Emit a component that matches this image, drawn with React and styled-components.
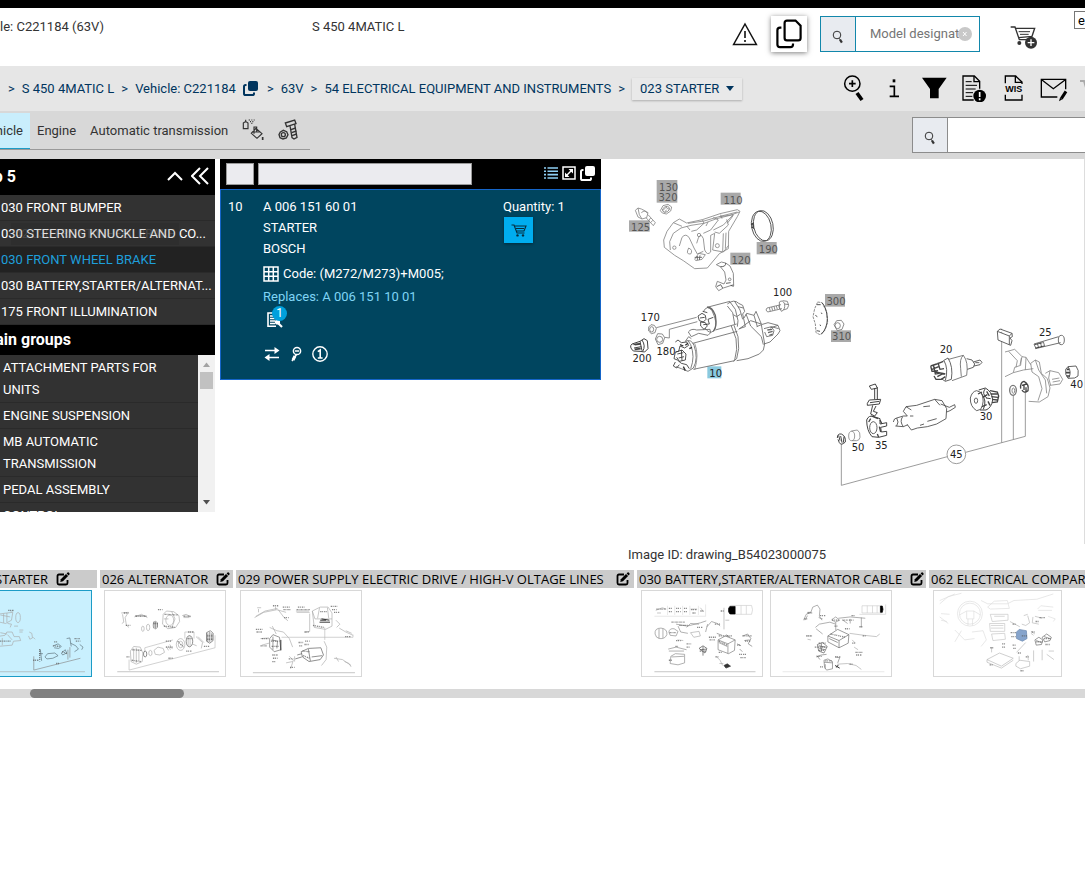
import React from "react";
import styled, { createGlobalStyle } from "styled-components";

const topGroups = [
    { name: "030 FRONT BUMPER" },
    { name: "030 STEERING KNUCKLE AND CO..." },
    { name: "030 FRONT WHEEL BRAKE", active: true },
    { name: "030 BATTERY,STARTER/ALTERNAT..." },
    { name: "175 FRONT ILLUMINATION" },
];

const mainGroups = [
    "ATTACHMENT PARTS FOR UNITS",
    "ENGINE SUSPENSION",
    "MB AUTOMATIC TRANSMISSION",
    "PEDAL ASSEMBLY",
    "CONTROL",
];

const App = () => {
    return (
        <>
            <GlobalStyle />
            <Page>
                <TopStripe />
                <Header />
                <Breadcrumb />
                <Tabs />
                <Content>
                    <Sidebar />
                    <Parts />
                    <Picture>
                        <Diagram />
                        <ImageId>Image ID: drawing_B54023000075</ImageId>
                    </Picture>
                </Content>
                <Strip />
                <Track>
                    <TrackThumb />
                </Track>
            </Page>
        </>
    );
};
export default App;

const SearchIcon = () => (
    <svg width="12" height="14" viewBox="0 0 12 14" fill="none" stroke="#333">
        <circle cx="5" cy="5" r="3.8" strokeWidth="1" />
        <path d="M7 8.2L8.3 10" strokeWidth="1" />
        <path d="M8 9.6L9.9 12.6" strokeWidth="2.2" />
    </svg>
);

const CopyIcon = ({ size = 15 }) => (
    <svg width={size} height={size} viewBox="0 0 15 15">
        <rect x="5" y="0" width="10" height="10" rx="2" fill="currentColor" />
        <path
            d="M3.5 4H2.6Q1 4 1 5.6V12.4Q1 14 2.6 14H9.4Q11 14 11 12.4V11.6"
            fill="none"
            stroke="currentColor"
            strokeWidth="2"
        />
    </svg>
);

const EditIcon = () => (
    <svg width="14" height="14" viewBox="0 0 14 14">
        <path
            d="M8 2.5H3Q1.5 2.5 1.5 4V11Q1.5 12.5 3 12.5H10Q11.5 12.5 11.5 11V8"
            fill="none"
            stroke="#000"
            strokeWidth="1.8"
        />
        <path d="M4.3 9.9L4.8 7.2L10 2L12.1 4.1L7 9.3Z" fill="#000" />
        <path d="M10.6 1.4L11.6 0.5Q12.3 0 13 0.8L13.5 1.4Q14 2 13.4 2.6L12.7 3.4Z" fill="#000" />
    </svg>
);

const Header = () => (
    <HeaderBar>
        <ModelCode>Vehicle: C221184 (63V)</ModelCode>
        <ModelName>S 450 4MATIC L</ModelName>
        <HeaderTools>
            <PlainButton aria-label="Warnings">
                <svg width="26" height="24" viewBox="0 0 26 24" fill="none" stroke="#111">
                    <path d="M13 2L24.4 22.4H1.6Z" strokeWidth="1.5" />
                    <path d="M13 9V16M13 18V20" strokeWidth="1.6" />
                </svg>
            </PlainButton>
            <CopyButton aria-label="Copy">
                <svg width="26" height="30" viewBox="0 0 26 30" fill="none" stroke="#000" strokeWidth="2.2">
                    <path d="M11 1.6H19.5L24.6 6.8V19Q24.6 21.4 22.2 21.4H11Q8.6 21.4 8.6 19V4Q8.6 1.6 11 1.6Z" />
                    <path d="M5.4 8.6H4Q1.4 8.6 1.4 11.2V25.6Q1.4 28.2 4 28.2H14.4Q17 28.2 17 25.6V24.6" />
                </svg>
            </CopyButton>
            <SearchGroup $blue>
                <SearchButton aria-label="Search model">
                    <SearchIcon />
                </SearchButton>
                <SearchInput aria-label="Model designation" placeholder="Model designat" />
                <Clear aria-label="Clear">
                    <svg width="14" height="14" viewBox="0 0 14 14">
                        <circle cx="7" cy="7" r="7" fill="#c8c8c8" />
                        <path d="M5 5L8.5 9M8.5 5L5 9" stroke="#fff" />
                    </svg>
                </Clear>
            </SearchGroup>
            <CartButton aria-label="Add to cart">
                <svg width="28" height="24" viewBox="0 0 84 72" fill="none" stroke="#333" strokeWidth="4">
                    <path d="M2 6H15L28 44H66" />
                    <path d="M18 10H74L66 34L26 38" />
                    <path d="M26 20H60M30 28H56" strokeWidth="3" />
                    <circle cx="28" cy="54" r="6" fill="#333" stroke="none" />
                    <circle cx="63" cy="53" r="18" fill="#333" stroke="none" />
                    <path d="M63 43V63M53 53H73" stroke="#fff" />
                </svg>
            </CartButton>
            <Language>en</Language>
        </HeaderTools>
    </HeaderBar>
);

const Breadcrumb = () => (
    <CrumbBar>
        <Crumbs aria-label="Breadcrumb">
            <span>&gt;</span>
            <a href="#model">S 450 4MATIC L</a>
            <span>&gt;</span>
            <a href="#vehicle">Vehicle: C221184</a>
            <CrumbCopy aria-label="Copy vehicle">
                <CopyIcon />
            </CrumbCopy>
            <span>&gt;</span>
            <a href="#63v">63V</a>
            <span>&gt;</span>
            <a href="#54">54 ELECTRICAL EQUIPMENT AND INSTRUMENTS</a>
            <span>&gt;</span>
            <GroupButton>
                023 STARTER
                <svg width="8" height="5" viewBox="0 0 8 5">
                    <path d="M0 0H8L4 5Z" fill="#00355e" />
                </svg>
            </GroupButton>
        </Crumbs>
        <Tools>
            <PlainButton aria-label="Zoom in">
                <svg width="22" height="28" viewBox="370 220 66 84" fill="none" stroke="#000">
                    <circle cx="398" cy="249" r="23" strokeWidth="4.5" />
                    <path d="M388 249H408M398 239V259" strokeWidth="5" />
                    <path d="M412 277L427 298" strokeWidth="11" />
                </svg>
            </PlainButton>
            <PlainButton aria-label="Information">
                <svg width="12" height="28" viewBox="507 220 36 84" fill="none" stroke="#000">
                    <path d="M512 257H526V287M512 287H540" strokeWidth="5" />
                    <rect x="521" y="236" width="8" height="9" fill="#000" stroke="none" />
                </svg>
            </PlainButton>
            <PlainButton aria-label="Filter">
                <svg width="26" height="28" viewBox="604 220 78 84">
                    <path d="M607 231H681L657 265V293H631V265Z" fill="#000" />
                </svg>
            </PlainButton>
            <PlainButton aria-label="Notes">
                <svg width="26" height="28" viewBox="732 220 78 84" fill="none" stroke="#000" strokeWidth="4">
                    <path d="M770 298H738V226H772L788 242V264" />
                    <path d="M771 226V243H788" />
                    <path d="M746 243H764M746 254H780M746 265H776M746 276H768M746 287H766" strokeWidth="3" />
                    <circle cx="788" cy="286" r="19" fill="#000" stroke="none" />
                    <path d="M788 274V289M788 293V299" stroke="#fff" strokeWidth="5" />
                </svg>
            </PlainButton>
            <PlainButton aria-label="WIS">
                <svg width="22" height="28" viewBox="850 220 66 84" fill="none" stroke="#000" strokeWidth="4">
                    <path d="M857 248V226H888L907 244V250M887 226V245H907" />
                    <path d="M857 282V298H907V282" />
                    <WisText x="882" y="275">WIS</WisText>
                </svg>
            </PlainButton>
            <PlainButton aria-label="Message">
                <svg width="28" height="28" viewBox="960 220 84 84" fill="none" stroke="#000" strokeWidth="4">
                    <path d="M1012 289H964V236H1037V266" />
                    <path d="M966 238L1000 264L1035 238" />
                    <path d="M1024 294L1038 272" strokeWidth="9" />
                    <path d="M1017 302L1020 291L1027 296Z" fill="#000" stroke="none" />
                </svg>
            </PlainButton>
            <PlainButton aria-label="Cart">
                <svg width="28" height="28" viewBox="0 0 28 28" fill="none" stroke="#aaa" strokeWidth="2">
                    <path d="M0 7H4L8 20H22M6 10H25L22 17" />
                </svg>
            </PlainButton>
        </Tools>
    </CrumbBar>
);

const Tabs = () => (
    <TabBar>
        <TabList>
            <Tab $active>Vehicle</Tab>
            <Tab>Engine</Tab>
            <Tab>Automatic transmission</Tab>
            <Tab aria-label="Fluids">
                <svg width="22" height="22" viewBox="0 0 66 66" fill="none" stroke="#333" strokeWidth="3.5">
                    <path d="M4 12L8 9H14L18 12V29H4ZM11 9V2" />
                    <path d="M20 3H24M28 3H31M35 3H38M24 8H27M31 8H34M28 13H31" />
                    <path d="M42 28L60 44L45 58L28 43ZM32 39H56M36 44V24H44V40" />
                    <path d="M62 54V63" strokeWidth="5" />
                </svg>
            </Tab>
            <Tab aria-label="Small parts">
                <svg width="22" height="22" viewBox="0 0 66 66" fill="none" stroke="#333" strokeWidth="4">
                    <path d="M7 39L16 34L26 38L30 47L25 57L15 60L6 56L3 47Z" />
                    <circle cx="16" cy="47" r="6" />
                    <path d="M22 12L50 3L54 14L26 23ZM36 20L42 56L48 60L57 55L50 16" />
                    <path d="M39 32L53 27M41 41L55 36M42 50L56 45" />
                </svg>
            </Tab>
        </TabList>
        <SearchGroup>
            <SearchButton aria-label="Search parts">
                <SearchIcon />
            </SearchButton>
            <SearchInput aria-label="Part search" />
        </SearchGroup>
    </TabBar>
);

const Sidebar = () => (
    <Side>
        <SideHead $tall>
            <SideTitle $width="16px">Top 5</SideTitle>
            <SideButtons>
                <PlainButton aria-label="Collapse">
                    <svg width="16" height="18" viewBox="0 0 16 18" fill="none" stroke="#fff" strokeWidth="2">
                        <path d="M1 13L8 6L15 13" />
                    </svg>
                </PlainButton>
                <PlainButton aria-label="Hide sidebar">
                    <svg width="18" height="18" viewBox="0 0 18 18" fill="none" stroke="#fff" strokeWidth="2">
                        <path d="M9 1L1 9L9 17M17 1L9 9L17 17" />
                    </svg>
                </PlainButton>
            </SideButtons>
        </SideHead>
        <TopList>
            {topGroups.map((group) => (
                <SideItem key={group.name} $active={group.active} $single>
                    {group.name}
                </SideItem>
            ))}
            <Ghost>42.030 FRONT WHEEL BRAKE</Ghost>
        </TopList>
        <SideHead>
            <SideTitle $width="71px">Main groups</SideTitle>
        </SideHead>
        <MainBox>
            <MainList>
                {mainGroups.map((name) => (
                    <SideItem key={name}>{name}</SideItem>
                ))}
            </MainList>
            <SideScroll>
                <svg width="9" height="5" viewBox="0 0 9 5">
                    <path d="M1 5L4.5 0.5L8 5Z" fill="#a3a3a3" />
                </svg>
                <SideThumb />
                <svg width="9" height="5" viewBox="0 0 9 5">
                    <path d="M1 0L4.5 4.5L8 0Z" fill="#505050" />
                </svg>
            </SideScroll>
        </MainBox>
    </Side>
);

const Parts = () => (
    <PartsPanel>
        <PartsHead>
            <PosInput aria-label="Position filter" />
            <PartInput aria-label="Part filter" />
            <PartsTools>
                <PlainButton aria-label="List view">
                    <svg width="14" height="14" viewBox="0 0 14 14" stroke="#8fd0f5" strokeWidth="1.6">
                        <path d="M0 2H2M0 5.3H2M0 8.6H2M0 12H2M3.5 2H14M3.5 5.3H14M3.5 8.6H14M3.5 12H14" />
                    </svg>
                </PlainButton>
                <PlainButton aria-label="Expand">
                    <svg width="14" height="14" viewBox="0 0 14 14" fill="none" stroke="#fff" strokeWidth="1.5">
                        <rect x="1" y="1" width="12" height="12" />
                        <path d="M4 10L10 4" />
                        <path d="M6.5 3H11V7.5ZM3 6.5V11H7.5Z" fill="#fff" stroke="none" />
                    </svg>
                </PlainButton>
                <PlainButton aria-label="Copy parts">
                    <CopyIcon />
                </PlainButton>
            </PartsTools>
        </PartsHead>
        <PartCard>
            <span>10</span>
            <div>
                <PartLine>A 006 151 60 01</PartLine>
                <PartLine>STARTER</PartLine>
                <PartLine>BOSCH</PartLine>
                <CodeLine>
                    <svg width="16" height="16" viewBox="0 0 16 16" fill="none" stroke="#fff" strokeWidth="1.5">
                        <path d="M1 1H15V15H1ZM5.7 1V15M10.3 1V15M1 5.7H15M1 10.3H15" />
                    </svg>
                    Code: (M272/M273)+M005;
                </CodeLine>
                <Replaces>Replaces: A 006 151 10 01</Replaces>
                <Note aria-label="Footnotes">
                    <svg width="16" height="18" viewBox="0 0 16 18" fill="none" stroke="#fff" strokeWidth="1.6">
                        <path d="M9 15.2H1V2H12V10" />
                        <path d="M3 5H10M3 7.5H10M3 10H8M3 12.5H8" />
                        <circle cx="10.5" cy="11" r="1.8" fill="#fff" />
                        <path d="M11 12L15 16" strokeWidth="2.2" />
                    </svg>
                    <Badge>1</Badge>
                </Note>
                <IconRow>
                    <PlainButton aria-label="Replacement">
                        <svg width="16" height="16" viewBox="0 0 16 16" fill="none" stroke="#fff" strokeWidth="1.6">
                            <path d="M1 4.5H12M15 11.5H4" />
                            <path d="M10.5 1L15.5 4.5L10.5 8ZM5.5 8L0.5 11.5L5.5 15Z" fill="#fff" stroke="none" />
                        </svg>
                    </PlainButton>
                    <PlainButton aria-label="Key">
                        <svg width="12" height="16" viewBox="0 0 12 16" fill="none" stroke="#fff" strokeWidth="1.5">
                            <circle cx="7" cy="5" r="3.6" />
                            <path d="M5 5H9M6.5 8.5L2 15" />
                            <path d="M5 10L3 14" strokeWidth="3" />
                        </svg>
                    </PlainButton>
                    <PlainButton aria-label="Details">
                        <svg width="16" height="16" viewBox="0 0 16 16" fill="none" stroke="#fff" strokeWidth="1.4">
                            <circle cx="8" cy="8" r="7.2" />
                            <path d="M5.8 5.6L8.2 4V12M5.8 12H10.6" strokeWidth="1.6" />
                        </svg>
                    </PlainButton>
                </IconRow>
            </div>
            <div>
                <PartLine>Quantity: 1</PartLine>
                <BuyButton aria-label="Add starter to cart">
                    <svg width="16" height="14" viewBox="0 0 16 14" fill="none" stroke="#062c3c" strokeWidth="1.1">
                        <path d="M0.5 2H3L6 10H13.5M3.5 3H15L13 8H5.5M5 5.5H13" />
                        <circle cx="6.5" cy="12.4" r="1.2" fill="#062c3c" stroke="none" />
                        <circle cx="12" cy="12.4" r="1.2" fill="#062c3c" stroke="none" />
                    </svg>
                </BuyButton>
            </div>
        </PartCard>
    </PartsPanel>
);

const upperLabels = [
    ["130", 146, 63], ["320", 144, 93], ["110", 339, 101], ["125", 62, 182],
    ["190", 445, 248], ["120", 363, 281], ["300", 648, 406], ["310", 665, 510],
    ["100", 488, 378], ["170", 91, 454], ["180", 138, 555], ["200", 66, 577],
    ["10", 287, 620],
];

const lowerLabels = [
    ["25", 676, 79], ["20", 378, 128], ["40", 770, 234], ["30", 498, 331],
    ["50", 114, 422], ["35", 184, 418], ["45", 409, 444],
];

const markers = [
    [110, 30, 62, 68], [302, 68, 60, 36], [27, 151, 62, 34], [410, 216, 60, 37],
    [331, 248, 60, 36], [615, 372, 60, 38], [633, 481, 60, 35],
];

const Diagram = () => (
    <DiagramSvg viewBox="0 0 1452 1155" role="img" aria-label="Starter drawing">
        <g transform="translate(57 33)">
            {markers.map(([x, y, w, h]) => (
                <rect key={`${x}-${y}`} x={x} y={y} width={w} height={h} fill="#a9a9a9" />
            ))}
            <rect x="262" y="589" width="42" height="36" fill="#8ac9df" />

            {/* bracket, bolts and clamp */}
            <g fill="none" stroke="#858585" strokeWidth="2.5">
                <path d="M133 232L131 210L141 184L160 158L178 147L200 159L247 149L300 131L352 119L360 124L352 140L326 184L325 236L298 251L262 294L224 296L190 272L164 256Z" />
                <path d="M151 240L149 215L160 190L183 174L213 166L252 160L290 146L330 136L358 126" />
                <path d="M160 158L186 169M247 149L252 160L230 180L214 184M280 142L295 150L272 180L250 190M300 140L340 134L310 165L280 180M320 148L325 165L298 190L284 186" />
                <path d="M178 228L186 202Q198 188 208 204L222 234L232 252L250 244M230 220Q240 180 250 206L254 240Q262 258 272 246L272 196L284 190L278 240L310 246L326 226M310 190L308 244" />
                <path d="M206 234Q196 254 212 252Q220 240 206 234M224 268L236 250L256 254L246 268L228 272Z" />
                <path d="M224 262H246M232 258V270M240 256L238 270" stroke="#555" />
                <path d="M204 160L252 153L304 138L352 126M200 168L210 180M264 156L258 168M302 134L306 146M318 188L316 236M340 136L322 160" />
                <circle cx="163" cy="233" r="5" />
                <circle cx="237" cy="195" r="5" />
                <circle cx="292" cy="227" r="6" />
                <path d="M46 121L54 114L64 117L72 121L84 128L80 143L66 147L54 141ZM54 114L58 134L66 147M64 128Q76 118 82 130" />
                <path d="M78 143L100 167L106 158L84 134M86 152L92 144M92 158L98 151" />
                <path d="M121 122L129 107L144 103L155 111L152 123L139 132L127 129Z" />
                <ellipse cx="138" cy="118" rx="11" ry="8" transform="rotate(-30 138 118)" />
                <path d="M129 121L138 112L147 118M134 126L140 119" />
            </g>
            <g fill="none" stroke="#444" strokeWidth="2.5">
                <ellipse cx="430" cy="167" rx="29" ry="46" transform="rotate(-12 430 167)" />
                <ellipse cx="424" cy="169" rx="29" ry="46" transform="rotate(-12 424 169)" />
                <path d="M393 164L399 160L400 174L394 171" strokeWidth="4" />
            </g>
            <g fill="none" stroke="#777" strokeWidth="2.5">
                <path d="M289 284L304 276L317 279L330 288L340 310L341 348M289 284L301 290L314 306L318 330L312 342L292 334L287 350L296 362L310 354L341 344" />
                <path d="M301 290Q318 291 317 279M290 350L302 344L308 354M318 340L332 338M332 346L341 349" stroke="#444" />
                <circle cx="329" cy="328" r="4" />
            </g>

            {/* complete starter */}
            <g fill="none" stroke="#666" strokeWidth="2.5">
                <path d="M261 412L330 394M286 480L350 462M250 425Q262 402 276 422Q296 462 282 482Q268 494 255 474" />
                <path d="M261 412Q276 410 286 436Q292 470 280 484" strokeWidth="4" />
                <path d="M234 438L246 430L256 436L258 448L250 456L238 452ZM242 456L256 458L262 468L252 478L242 468ZM248 424L262 428M240 444L254 442M250 464L268 462L264 448L280 442" stroke="#333" />
                <path d="M322 402Q342 386 356 400L368 406L374 424L368 432L376 470L358 476M330 396L346 418L354 452L352 470M344 394L360 420L368 448M322 408L338 428L344 462M354 410L370 414M362 432L350 440L340 434" />
                <path d="M218 520L352 484M220 598L344 572M342 466L354 500L356 536L350 566L340 574M334 468L348 506L350 538L344 570" />
                <path d="M356 478L392 452L424 462M350 572L384 566L418 552L430 540L434 522L424 464L410 470M372 444L380 430L402 436L408 424L424 462M378 432L392 468M402 436L412 470M392 468L424 500L430 524" />
                <path d="M424 464L444 458L474 466L480 482L474 492L450 516L432 522M432 476L454 470L476 476M454 470L462 482L458 496L440 500L434 486M474 466L450 474" />
                <path d="M442 480L456 478M444 488L458 484M448 496L458 492" strokeWidth="4" />
                <path d="M205 486Q214 474 230 480L270 478Q276 490 264 496L236 490L214 500Z" />
                <path d="M196 514Q214 506 222 526Q236 566 220 594L204 604L184 596L168 590M204 512L212 524Q226 560 212 596M196 514L206 500L214 506" />
                <path d="M224 520Q238 554 224 600" stroke="#888" />
                <path d="M166 516L174 510L184 518L200 516L206 526L194 534L180 528L176 544L166 546L162 566L172 570L184 580L200 584L208 596M168 546L186 540L198 552L196 570L178 574L170 562M172 552L190 548M176 564L192 560M184 540L186 572M166 576L160 588L170 594L178 584" stroke="#333" />
                <path d="M180 524L190 528M196 526L204 520M190 590L196 602M208 536L216 532" stroke="#333" strokeWidth="4" />
            </g>
            <g fill="none" stroke="#777" strokeWidth="2.5">
                <path d="M109 473L230 442M134 502L148 504V478L232 455" />
                <path d="M86 471L93 464L103 466L109 475L105 488L94 491L86 483Z" />
                <ellipse cx="95" cy="478" rx="6" ry="8" />
                <path d="M106 507L113 491L127 492L134 503L128 520L114 524Z" />
                <circle cx="119" cy="508" r="9" />
                <path d="M441 414L483 404M443 426L486 416M441 414L438 420L443 426M448 413L451 424M455 411L458 422M462 409L465 420M469 408L472 418M476 406L479 417" />
                <path d="M478 396Q488 388 494 402Q496 420 484 424Q476 414 478 396M488 392L502 394L506 406L502 416L490 420M494 402L506 404" />
                <path d="M593 396L606 398L620 426L623 456L614 482L600 494L588 488L586 462L579 440L584 416Z" strokeDasharray="8 3" />
                <path d="M606 398Q620 412 622 446Q622 474 604 493M591 404L602 404M590 482L600 484" stroke="#333" />
                <path d="M586 436L592 440M604 428L606 432M600 464L602 468" stroke="#333" />
                <path d="M642 464L650 452L664 451L672 462L666 478L652 482Z" />
                <ellipse cx="653" cy="467" rx="8" ry="9" />
            </g>
            <g fill="none" stroke="#444" strokeWidth="3">
                <path d="M36 522L60 514L72 506L82 512L84 536L74 546L60 544L40 543Q26 530 36 522M60 514L66 542M40 524L62 520M42 534L64 530M66 510Q78 528 68 544" />
                <path d="M44 524L62 522M44 538L62 536" strokeWidth="5" />
            </g>
            {upperLabels.map(([text, x, y]) => (
                <PartLabel key={text} x={x} y={y} $faded={y < 300 || x > 600}>
                    {text}
                </PartLabel>
            ))}
        </g>

        {/* exploded view */}
        <g transform="translate(657 453)">
            <g fill="none" stroke="#888" strokeWidth="2.5">
                <path d="M64 402V526L382 440M437 427L616 379V244M545 56V398M580 256V388" />
                <circle cx="409" cy="433" r="28" />
                <path d="M555 126L584 118L606 140L618 142L632 164M555 200L580 188L584 172L602 166L604 144M580 188L610 180L640 176M566 124L592 152L588 172M606 140L600 164M618 142L616 180" />
                <path d="M632 160L646 150L658 156L664 190L682 206L690 234L684 260L658 276L626 274M632 160L636 186L656 200L666 236L654 272M646 150L656 180L676 210L680 250" />
                <path d="M676 190L690 182L716 188L728 208L720 222L690 226M696 208L718 204M698 216L720 212M690 182L686 204L692 226" />
                <path d="M642 102L716 80M646 116L722 98M642 102L648 116M652 100L656 114M661 97L665 111M670 95L674 109" stroke="#555" />
                <ellipse cx="724" cy="90" rx="9" ry="14" stroke="#555" />
                <path d="M644 104L668 98M647 114L672 108" stroke="#333" />
            </g>
            <g fill="none" stroke="#444" strokeWidth="2.5">
                <path d="M532 64L540 57L576 70L577 80L570 84L576 92L572 106L534 90ZM532 64L568 78L576 70M568 78V104" fill="#fff" />
                <path d="M737 178L744 170L768 168Q778 180 774 198L764 204L744 205Q734 194 737 178" />
                <path d="M744 170Q756 186 746 204" />
                <path d="M740 178H748M738 188H750M740 198H750" strokeWidth="5" />

                <path d="M386 148L430 136Q446 156 440 196L396 212M430 136Q418 146 422 176L424 200" stroke="#666" />
                <path d="M370 152L384 144Q400 170 394 208L376 214L364 206M372 152Q386 176 376 212M440 146L456 150L464 162L460 172L442 178M460 156L480 150L486 157L480 164L462 168M466 158H478" />
                <path d="M332 168L350 162L370 154M332 168L336 184L354 182M340 164L346 192L358 190M342 198L348 208L364 208L376 200M354 158L360 178L372 176M346 186L376 192M352 200L370 190M336 178L356 170" strokeWidth="4" />

                <path d="M451 264Q456 244 470 242L484 248Q496 274 482 298L470 302Q450 290 451 264Z" />
                <ellipse cx="468" cy="272" rx="5" ry="8" />
                <path d="M476 240L496 234Q516 244 518 270Q514 294 498 300L480 300M496 236Q484 250 500 264M498 264L512 266M484 250Q502 272 490 298" strokeWidth="3" />
                <path d="M510 242L532 246L536 258L532 276L516 278M512 252L532 252M514 260L534 262M516 268L532 270" strokeWidth="4" />
                <path d="M474 252L486 246M488 262L502 254M486 290L500 284M500 244L508 258M504 274L510 286" strokeWidth="4" />

                <ellipse cx="579" cy="241" rx="10" ry="15" stroke="#777" strokeWidth="4" />
                <ellipse cx="580" cy="242" rx="4" ry="8" stroke="#777" />
                <path d="M602 236Q600 216 612 214Q628 222 624 242Q612 252 606 240M612 226V240M606 226L620 222M618 232V244" strokeWidth="4" />

                <path d="M148 228L166 222L172 234L154 238ZM164 234V268M172 232V270M142 280L148 270L182 268L178 282L142 286ZM150 278L178 274M158 286L152 312L164 318L172 308L160 304L168 288" strokeWidth="3" />
                <path d="M140 330Q146 314 162 320L180 326L180 342L200 338V348L182 352L184 366L200 364V376L176 382L156 380Q140 362 140 330Z" strokeWidth="3" />
                <ellipse cx="160" cy="353" rx="11" ry="18" />
                <path d="M154 318L174 326M180 330L186 342M178 350L182 366M146 336L152 326M172 372L176 382" strokeWidth="4" />
                <path d="M220 336Q222 324 230 324L250 318L262 318M226 348L250 350L264 344M248 320Q238 334 250 350M230 324Q238 336 230 348" />
                <path d="M262 318L250 304L258 290L290 286L344 268L366 272L380 296L378 326L350 342L322 350L292 354L274 360L262 344M344 268L360 286M258 290L274 300M362 282L388 292L404 284L406 292L390 302L380 306M310 290L330 288M280 318L270 318M322 334L350 326M300 346L312 342" />
                <path d="M52 384Q52 370 64 372Q78 378 76 396Q64 408 58 398L54 388M62 378L66 398M72 380L70 398M56 376L60 392" strokeWidth="3" />
            </g>
            <g fill="none" stroke="#888" strokeWidth="2.5">
                <ellipse cx="95" cy="378" rx="9" ry="14" />
                <path d="M94 363L112 360Q122 366 120 382Q118 392 110 392L96 392" />
            </g>
            {lowerLabels.map(([text, x, y]) => (
                <PartLabel key={text} x={x} y={y}>
                    {text}
                </PartLabel>
            ))}
        </g>
    </DiagramSvg>
);

const StarterThumb = () => (
    <ThumbSvg viewBox="-89 151 365 259">
        <path d="M-10 222L20 218L38 216L34 240L16 250L-10 244M0 224L30 230M10 220V248M20 218V246M22 250L34 252L30 262" />
        <ellipse cx="54" cy="232" rx="7" ry="15" />
        <path d="M-10 290L14 286L20 276L36 276L42 290L58 290L62 302L40 304L36 316L-10 320M0 278L20 282M6 294V316M22 284L36 300M58 270H70M58 276H68M30 212H40M42 258H54" />
        <path d="M88 276L96 280L98 294L90 298L86 288M100 292L106 298" />
        <path d="M102 350V392L244 356M212 354V322M206 330V360" stroke="#888" />
        <path d="M122 330L126 364M118 342H130M136 352L144 342L166 340L176 348L160 356L142 358ZM162 318L176 312L186 320L178 326L164 324M186 340L198 330L202 340L190 346ZM202 296L212 294L216 320M214 310L230 318L238 328L226 336M242 314L252 322L248 330" stroke="#5c7078" />
        <Marks d="M100 362H118M120 328V366M164 306H174M226 296H242M230 304H244M170 372H182M160 318L184 320M188 336L204 342M-2 304H34M24 210H40" />
        <path d="M-80 397H258" />
    </ThumbSvg>
);

const AlternatorThumb = () => (
    <ThumbSvg viewBox="313 151 365 259">
        <path d="M362 218L384 216L374 232L378 256L386 262M366 222L370 246L364 250M402 230L424 222L442 232M404 226H436M548 226L560 222L574 230M552 232H570" />
        <ellipse cx="510" cy="240" rx="12" ry="16" />
        <path d="M490 222L500 212L522 214L538 226L540 244L528 262L504 266L488 252ZM516 214L526 236L516 264M492 236H506" />
        <ellipse cx="428" cy="266" rx="4" ry="8" />
        <ellipse cx="444" cy="262" rx="5" ry="10" />
        <ellipse cx="466" cy="255" rx="7" ry="12" />
        <path d="M462 244V264M467 244V266M472 248V262" stroke="#555" />
        <path d="M386 360V392L648 324V286M434 336V324L520 300M556 296V276H584V296" stroke="#bbb" />
        <path d="M390 334L400 320L420 322L428 340L426 366L408 374L392 366ZM400 326V366M408 324V370M416 328V364" />
        <ellipse cx="435" cy="343" rx="5" ry="9" stroke="#555" />
        <ellipse cx="451" cy="340" rx="5" ry="8" />
        <path d="M462 332L474 322L490 326L494 338L480 346L466 344ZM500 320L506 332M510 314L518 328M506 318L512 330" />
        <ellipse cx="543" cy="314" rx="13" ry="18" />
        <ellipse cx="543" cy="314" rx="7" ry="10" />
        <ellipse cx="570" cy="304" rx="10" ry="17" stroke="#555" />
        <path d="M566 290V320M572 288V320M578 312L592 318M590 290L610 308L606 326M596 290L614 308" />
        <path d="M622 278L634 272L642 280V302L632 310L622 304ZM626 280V306M632 276V306M638 280V302" stroke="#555" />
        <Marks d="M370 218H384M376 256H390M406 228H440M474 208H488M552 228H574M494 222L534 224M492 258L528 262M460 250H474M498 304H514M498 322H520M506 356H520M378 352H388M396 330L424 332M394 362L422 366M566 276H584M560 334H576M614 320H630M624 288H642M624 298H642M534 304L552 322M564 296H578" />
        <path d="M350 397H660" />
    </ThumbSvg>
);

const PowerThumb = () => (
    <ThumbSvg viewBox="721 151 365 259">
        <path d="M762 232L790 216L830 208L858 216M766 228L794 212L832 204M834 208L852 232L864 242M770 202H782M774 206V216M826 200V208M888 212H928M890 216H930" />
        <path d="M938 212L962 200H986L998 218V258L978 268L944 262ZM938 212L946 236L998 236M960 202L954 234M984 202L988 234M930 220V274L916 276M1010 240L1022 252L1012 262M1020 264L1040 276L1062 286M1040 272L1058 280" />
        <path d="M962 240H980M960 246H992M966 236L990 240" stroke="#333" strokeWidth="3" />
        <path d="M844 292H1062V284M976 262V300" stroke="#bbb" />
        <path d="M808 262L830 272L850 276L868 296L878 322M816 258L828 282M780 296L806 294M784 316L806 310" />
        <path d="M808 296L818 284L838 292L842 330L822 336L808 322ZM814 300L832 304L830 326M818 290V330" stroke="#666" />
        <path d="M842 300V332" stroke="#333" strokeWidth="3" />
        <path d="M904 336L926 326L964 324L972 346L962 360L928 366L908 352ZM926 328L932 364M936 352L968 348M886 358L906 352M892 346L906 342" stroke="#555" />
        <path d="M974 304L982 322L980 360L966 378M868 350L880 362L872 388M884 350V366M858 370L878 366M1004 356L1030 360L1056 378M1010 352L1018 366M1036 366L1050 372L1056 382" />
        <Marks d="M818 196H834M848 200H870M850 208H872M894 200H914M890 208H930M994 198H1014M998 208H1012M1004 216H1022M766 268H786M768 276H786M784 296H804M780 318H800M816 346H834M818 356H832M816 366H826M896 308H910M898 318H908M916 304H930M914 314H928M962 214H982M940 256L974 262M812 304H838M814 320H838M908 334L930 336M910 348L930 356M866 358H880M1038 290H1054M852 232H866M870 384H884M914 276H928" />
        <path d="M757 400H1068" />
    </ThumbSvg>
);

const BatteryThumb = () => (
    <ThumbSvg viewBox="124 151 362 259">
        <path d="M160 228H316V192M200 196V224M222 196V224M246 196V224M268 196V224M294 196V224" stroke="#ddd" />
        <path d="M164 210L184 202L196 206M168 218H180M270 206H290M300 202L310 214" />
        <path d="M388 198L394 195H456Q462 208 456 222H394L386 216ZM424 195V222M440 195V222" stroke="#ccc" />
        <path d="M390 198H406V221H390L386 214V204Z" fill="#000" stroke="#000" />
        <path d="M372 202V268M376 240H388" />
        <path d="M162 282Q160 264 180 264Q200 266 198 284Q192 298 176 296Q164 294 162 282M174 266V296M186 266V294M204 276Q206 264 220 266L232 274L226 288L208 286ZM226 252L260 258L300 248L318 242M232 258L240 276L262 280M258 262L270 250L296 252M320 260L334 244L352 250L360 258M316 276L322 252" stroke="#888" />
        <path d="M270 278L280 292L300 288L296 274ZM230 300L248 302" />
        <path d="M354 300L376 288L406 300L404 332L386 342L354 330ZM354 300L384 312L406 300M384 312V342M356 308L382 320M350 280L366 286M378 284L390 292" stroke="#777" />
        <path d="M430 288L444 282L454 296L446 312L458 320M434 302L450 300M412 312L424 318M420 328L428 336" stroke="#777" />
        <path d="M202 328L226 322L258 330M204 334H250M210 350L224 342L252 344V370L232 376L208 372ZM212 352L250 350" stroke="#888" />
        <path d="M296 326L308 318L320 326L314 340ZM300 330L318 328M308 320V348" stroke="#444" />
        <path d="M372 378L382 373L392 380L378 386Z" fill="#333" stroke="#333" />
        <path d="M348 350L360 362L368 378M358 372H370" />
        <Marks d="M204 204H216M204 214H216M226 204H240M226 214H240M250 204H262M250 214H262M272 208H290M276 218H288M300 212H310M166 206H194M362 212H374M212 246H252M236 256H262M290 262H306M344 252H362M326 292H348M328 300H344M356 304L382 316M412 316H424M418 344H440M422 354H440M428 288H456M436 304H452M258 312H272M258 322H270M204 362H216M224 320H232M226 302H240M206 278H226M356 338H368M356 288H398M298 334H318M346 352H356" />
        <path d="M160 397H468" />
    </ThumbSvg>
);

const BatteryThumbB = () => (
    <ThumbSvg viewBox="511 151 365 259">
        <path d="M788 196H848Q854 208 848 218H788ZM804 196V218M820 196V218M834 196V218M780 222H860V192" stroke="#ccc" />
        <path d="M844 197H850Q854 207 850 216H844Z" fill="#000" stroke="#000" />
        <path d="M610 240L618 222L632 216L638 200L652 194L660 206L658 228L666 240M614 240L622 226M656 232L668 236M622 216H634M646 262L658 252L690 246L708 252M648 266L668 282" stroke="#888" />
        <path d="M696 238L708 230L720 240L706 246ZM716 234L752 230L798 234M752 236V250M786 232V262M730 240L744 250M708 246V270" stroke="#888" />
        <path d="M684 288L714 268L748 284L746 310L718 324L684 306ZM684 288L718 302L748 284M718 302V324M688 296L714 308" stroke="#666" />
        <path d="M750 280L794 286L832 290L842 282M758 300L768 310M764 322L776 330M618 288L636 288M622 298L632 300" />
        <path d="M652 314L668 308L682 320L672 340L656 334ZM656 318L678 322M658 326L676 330M664 312V336" stroke="#555" />
        <path d="M672 362L684 358L698 366V388L680 392L674 384ZM648 352L664 346L680 344M650 348L660 360M706 352L720 354L714 370M672 368L698 370M676 374V388" stroke="#777" />
        <path d="M706 378L720 386M710 384L716 376" stroke="#333" strokeWidth="3" />
        <path d="M712 374L744 372L770 378L786 390" />
        <Marks d="M622 218H636M660 226H676M612 236H622M756 226H768M696 240H718M728 240H744M748 240H762M704 258H714M736 266H750M780 260H790M692 282L738 292M656 310H678M654 322H680M656 332H674M644 322H654M768 338H790M770 346H786M758 310H770M790 288H802M652 350H666M706 352H722M750 374H762M660 382H672M676 364H696M618 288H634" />
        <path d="M546 397H856" stroke="#ddd" />
    </ThumbSvg>
);

const ComputerThumb = () => (
    <ThumbSvg viewBox="997 151 386 259">
        <g stroke="#dcdcdc">
            <path d="M1014 190L1040 168L1080 158M1014 180L1060 160M1140 180L1160 190H1220L1240 180L1310 176L1360 160M1160 200L1180 182L1220 180L1226 204L1168 206ZM1060 270L1090 300L1120 296M1080 272L1060 306M1112 276L1146 272L1156 300L1140 320M1014 230L1040 250M1018 220L1044 222M1018 240L1036 244" />
            <circle cx="1106" cy="220" r="38" />
            <circle cx="1106" cy="220" r="32" />
            <path d="M1074 224L1096 212H1118L1138 224M1096 212V236H1118V212M1100 236V256M1114 236V256" />
            <path d="M1168 222H1222V240L1174 244ZM1166 250H1212V274H1168ZM1172 282L1212 280L1214 298L1176 302ZM1180 228H1212M1170 256H1208M1170 264H1208" stroke="#c4c4c4" />
            <path d="M1312 206L1322 196L1360 200M1314 210H1356M1344 228L1366 236L1360 244" />
        </g>
        <g stroke="#b5b5b5">
            <path d="M1282 226L1288 248L1276 256L1264 252M1270 226L1282 222M1298 230L1296 248L1316 252M1228 244L1258 260M1304 228L1326 234M1292 274L1304 282M1292 280L1300 286" />
            <path d="M1158 360L1196 340L1238 356L1202 380ZM1158 360V368L1202 386L1238 362M1246 372L1258 362L1288 366V380L1260 388L1246 380ZM1256 350V364M1282 346L1284 362M1172 322V338M1248 338L1276 308M1300 332V366M1326 330V362M1340 344L1362 360M1346 334H1362" />
        </g>
        <path d="M1248 276L1256 268L1278 272L1280 296L1266 304L1248 296Z" fill="#86a4cc" stroke="#6583ad" />
        <path d="M1304 300L1316 292L1328 300L1324 314L1308 316ZM1326 292L1340 282L1354 292L1350 302L1334 306ZM1308 302L1324 308M1332 290L1350 296" stroke="#666" />
        <Marks d="M1230 278H1246M1232 290H1246M1264 288H1280M1204 312H1214M1204 322H1214M1236 316H1248M1238 326H1246M1308 306H1328M1332 296H1352M1336 314H1350M1168 324H1178M1252 340H1262M1276 352H1288M1166 376H1176M1260 394H1270M1294 276H1306M1236 252H1248M1318 232H1334M1306 244H1316" />
    </ThumbSvg>
);

const Strip = () => (
    <StripRow>
        <StripGroup $width="97px">
            <StripTitle $end>023 STARTER <EditIcon /></StripTitle>
            <Thumbs $end>
                <Thumb href="#023" $active aria-label="023 starter"><StarterThumb /></Thumb>
            </Thumbs>
        </StripGroup>
        <StripGroup $width="133px">
            <StripTitle>026 ALTERNATOR <EditIcon /></StripTitle>
            <Thumbs>
                <Thumb href="#026" aria-label="026 alternator"><AlternatorThumb /></Thumb>
            </Thumbs>
        </StripGroup>
        <StripGroup $width="398px">
            <StripTitle>029 POWER SUPPLY ELECTRIC DRIVE / HIGH-V OLTAGE LINES <EditIcon /></StripTitle>
            <Thumbs>
                <Thumb href="#029" aria-label="029 power supply"><PowerThumb /></Thumb>
            </Thumbs>
        </StripGroup>
        <StripGroup $width="289px">
            <StripTitle>030 BATTERY,STARTER/ALTERNATOR CABLE <EditIcon /></StripTitle>
            <Thumbs>
                <Thumb href="#030" aria-label="030 battery cable"><BatteryThumb /></Thumb>
                <Thumb href="#030b" aria-label="030 alternator cable"><BatteryThumbB /></Thumb>
            </Thumbs>
        </StripGroup>
        <StripGroup $width="280px">
            <StripTitle>062 ELECTRICAL COMPARTMENT <EditIcon /></StripTitle>
            <Thumbs>
                <Thumb href="#062" $wide aria-label="062 electrical"><ComputerThumb /></Thumb>
            </Thumbs>
        </StripGroup>
    </StripRow>
);

const GlobalStyle = createGlobalStyle`
    * {
        box-sizing: border-box;
    }
    body {
        margin: 0;
        background: #fff;
        font-family: Roboto, "Liberation Sans", sans-serif;
        font-size: 13px;
        color: #333;
    }
    button,
    input {
        font: inherit;
    }
    svg {
        display: block;
        flex: none;
    }
`;

const Page = styled.div`
    overflow: hidden;
`;

const TopStripe = styled.div`
    height: 8px;
    background: #000;
`;

const PlainButton = styled.button`
    display: flex;
    padding: 0;
    border: 0;
    background: none;
    color: inherit;
    cursor: pointer;
`;

const HeaderBar = styled.header`
    display: flex;
    height: 58px;
    line-height: 20px;
    white-space: nowrap;
`;

const ModelCode = styled.div`
    display: flex;
    justify-content: flex-end;
    flex: none;
    width: 104px;
    padding-top: 9px;
    overflow: hidden;
`;

const ModelName = styled.div`
    margin-left: 208px;
    padding-top: 9px;
`;

const HeaderTools = styled.div`
    display: flex;
    align-items: center;
    margin-left: auto;
    padding-bottom: 6px;
`;

const CopyButton = styled(PlainButton)`
    justify-content: center;
    align-items: center;
    width: 36px;
    height: 36px;
    margin: 0 13px;
    background: #fff;
    box-shadow: 0 1px 5px rgba(0, 0, 0, 0.5);
`;

const SearchGroup = styled.div`
    position: relative;
    display: flex;
    width: ${({ $blue }) => ($blue ? "160px" : "212px")};
    height: 36px;
    border: 1px solid ${({ $blue }) => ($blue ? "#1287ab" : "#8c8c8c")};
    background: #fff;

    button:first-child {
        border-right: 1px solid ${({ $blue }) => ($blue ? "#1287ab" : "#8c8c8c")};
    }
`;

const SearchButton = styled.button`
    display: flex;
    flex: none;
    justify-content: center;
    align-items: center;
    width: 35px;
    padding: 6px 0 0;
    border: 0;
    background: #e8ebf0;
`;

const SearchInput = styled.input`
    flex: 1;
    min-width: 0;
    padding: 0 14px;
    border: 0;
    background: none;
    outline: none;

    &::placeholder {
        color: #757575;
        opacity: 1;
    }
`;

const Clear = styled(PlainButton)`
    position: absolute;
    right: 7px;
    top: 10px;
`;

const CartButton = styled(PlainButton)`
    margin: 6px 0 0 30px;
`;

const Language = styled.div`
    align-self: flex-start;
    width: 30px;
    height: 18px;
    margin: 3px -19px 0 36px;
    padding-left: 3px;
    border: 1px solid #767676;
    color: #000;
    line-height: 17px;
`;

const CrumbBar = styled.div`
    display: flex;
    align-items: center;
    justify-content: space-between;
    height: 45px;
    background: #e6e6e6;
    color: #00355e;
`;

const Crumbs = styled.nav`
    display: flex;
    align-items: center;
    gap: 7px;
    padding-left: 8px;
    white-space: nowrap;

    a {
        color: inherit;
        text-decoration: none;
    }
`;

const CrumbCopy = styled(PlainButton)`
    margin-right: 2px;
`;

const GroupButton = styled.button`
    display: flex;
    align-items: center;
    gap: 7px;
    height: 22px;
    padding: 0 8px;
    border: 0;
    background: #e9e9e9;
    color: inherit;
    box-shadow: 0 1px 2px rgba(0, 0, 0, 0.25);
`;

const Tools = styled.div`
    display: grid;
    flex: none;
    grid-template-columns: repeat(7, 40px);
    justify-items: center;
    margin-right: -29px;
    padding-bottom: 2px;
`;

const WisText = styled.text`
    fill: #000;
    stroke: none;
    font: bold 27px "Liberation Sans", sans-serif;
    text-anchor: middle;
`;

const TabBar = styled.div`
    display: flex;
    justify-content: space-between;
    height: 48px;
    background: #d8d8d8;

    ${SearchGroup} {
        margin: 6px -39px 0 0;
    }
`;

const TabList = styled.div`
    display: flex;
    height: 37px;
    width: 310px;
    margin-top: 2px;
    border-bottom: 1px solid #999;
`;

const Tab = styled.button`
    display: flex;
    flex: none;
    align-items: center;
    justify-content: flex-end;
    width: ${({ $active }) => ($active ? "30px" : "auto")};
    padding: 0 7px 2px;
    border: 0;
    overflow: hidden;
    color: #333;
    background: ${({ $active }) => ($active ? "#c9eefc" : "none")};
    box-shadow: ${({ $active }) => ($active ? "inset 0 -1px #1c9cc7" : "none")};
`;

const Content = styled.main`
    display: flex;
    align-items: flex-start;
    height: 411px;
`;

const Side = styled.aside`
    flex: none;
    width: 215px;
    color: #fff;
`;

const SideHead = styled.div`
    display: flex;
    align-items: center;
    justify-content: space-between;
    height: ${({ $tall }) => ($tall ? "36px" : "30px")};
    padding: 0 6px 2px 0;
    background: #000;
`;

const SideTitle = styled.h2`
    display: flex;
    justify-content: flex-end;
    width: ${({ $width }) => $width};
    margin: 0;
    overflow: hidden;
    font-size: 16px;
    font-weight: 700;
    white-space: nowrap;
`;

const SideButtons = styled.div`
    display: flex;
    gap: 8px;
`;

const TopList = styled.ul`
    position: relative;
    margin: 0;
    padding: 0;
    list-style: none;
`;

const SideItem = styled.li`
    padding: ${({ $single }) => ($single ? "2px 0 1px 1px" : "2px 20px 1px 3px")};
    border-bottom: 1px solid #2a2a2a;
    background: ${({ $active }) => ($active ? "#222" : "#323232")};
    color: ${({ $active }) => ($active ? "#1e9fdb" : "#fff")};
    line-height: 22px;
    white-space: ${({ $single }) => ($single ? "nowrap" : "normal")};
    overflow: hidden;
`;

const Ghost = styled.div`
    position: absolute;
    left: 11px;
    top: 28px;
    padding: 0 4px;
    background: rgba(24, 24, 24, 0.15);
    color: rgba(255, 255, 255, 0.15);
    font-size: 12px;
    line-height: 22px;
`;

const MainBox = styled.div`
    display: flex;
    height: 157px;
    overflow: hidden;
`;

const MainList = styled.ul`
    flex: 1;
    margin: 0;
    padding: 0;
    list-style: none;
    background: #323232;
`;

const SideScroll = styled.div`
    display: flex;
    flex-direction: column;
    align-items: center;
    width: 17px;
    padding: 7px 0;
    background: #f1f1f1;

    svg:last-child {
        margin-top: auto;
    }
`;

const SideThumb = styled.div`
    width: 13px;
    height: 17px;
    margin-top: 5px;
    background: #c1c1c1;
`;

const PartsPanel = styled.section`
    flex: none;
    width: 381px;
    margin-left: 5px;
    color: #fff;
`;

const PartsHead = styled.div`
    display: flex;
    gap: 4px;
    height: 30px;
    padding: 4px 6px;
    background: #000;
`;

const PosInput = styled.input`
    width: 28px;
    height: 22px;
    padding: 0;
    border: 1px solid #999;
    background: #ebebef;
`;

const PartInput = styled(PosInput)`
    width: 214px;
`;

const PartsTools = styled.div`
    display: flex;
    gap: 4px;
    margin-left: auto;
    padding-top: 3px;
`;

const PartCard = styled.div`
    display: grid;
    grid-template-columns: 35px 240px 1fr;
    height: 191px;
    padding: 6px 7px;
    border: 1px solid #1565c8;
    background: #00455f;
    line-height: 22px;
`;

const PartLine = styled.div`
    height: 21px;
`;

const CodeLine = styled.div`
    display: flex;
    align-items: center;
    gap: 4px;
    height: 24px;
    margin-top: 3px;
`;

const Replaces = styled.div`
    height: 22px;
    color: #7fd4f5;
`;

const Note = styled(PlainButton)`
    position: relative;
    margin: 3px 0 0 4px;
`;

const Badge = styled.span`
    position: absolute;
    left: 5px;
    top: -5px;
    width: 15px;
    height: 15px;
    border-radius: 50%;
    background: #00a0dc;
    color: #fff;
    font-size: 12px;
    line-height: 15px;
    text-align: center;
`;

const IconRow = styled.div`
    display: flex;
    gap: 10px;
    margin: 17px 0 0 1px;
`;

const BuyButton = styled.button`
    display: flex;
    align-items: center;
    justify-content: center;
    width: 29px;
    height: 26px;
    margin-left: 1px;
    padding: 0;
    border: 0;
    background: #00adef;
    box-shadow: 0 1px 3px rgba(0, 0, 0, 0.4);
`;

const Picture = styled.section`
    flex: 1;
    min-width: 0;
    box-shadow: inset -1px 0 #ddd;
`;

const DiagramSvg = styled.svg`
    width: 100%;
    aspect-ratio: 484 / 385;
`;

const PartLabel = styled.text`
    fill: ${({ $faded }) => ($faded ? "#555" : "#222")};
    font: 30px "DejaVu Sans", "Noto Sans", sans-serif;
    text-anchor: middle;
`;

const ImageId = styled.div`
    padding-left: 27px;
    background: #fff;
    line-height: 22px;
`;

const StripRow = styled.div`
    display: flex;
    gap: 3px;
    color: #000;
    font-family: "Open Sans", "Noto Sans", sans-serif;
`;

const StripGroup = styled.div`
    flex: none;
    width: ${({ $width }) => $width};
`;

const StripTitle = styled.div`
    display: flex;
    align-items: center;
    justify-content: ${({ $end }) => ($end ? "flex-end" : "space-between")};
    gap: 8px;
    height: 18px;
    padding: ${({ $end }) => ($end ? "0 27px 0 0" : "0 4px 0 2px")};
    overflow: hidden;
    background: #cbcbcb;
    white-space: nowrap;
`;

const Thumbs = styled.div`
    display: flex;
    justify-content: ${({ $end }) => ($end ? "flex-end" : "flex-start")};
    gap: 7px;
    padding: ${({ $end }) => ($end ? "2px 5px 0 0" : "2px 0 0 4px")};
`;

const Thumb = styled.a`
    flex: none;
    width: ${({ $wide }) => ($wide ? "129px" : "122px")};
    height: 87px;
    border: 1px solid ${({ $active }) => ($active ? "#1c9cc7" : "#d8d8d8")};
    background: ${({ $active }) => ($active ? "#c9f0fe" : "#fff")};
`;

const ThumbSvg = styled.svg`
    width: 100%;
    height: 100%;
    fill: none;
    stroke: #aaa;
    stroke-width: 2;
`;

const Marks = styled.path`
    stroke: #555;
    stroke-width: 4;
    stroke-dasharray: 4 2 3 3;
    opacity: 0.7;
`;

const Track = styled.div`
    height: 9px;
    margin-top: 12px;
    background: #d8d8d8;
`;

const TrackThumb = styled.div`
    width: 154px;
    height: 9px;
    margin-left: 30px;
    border-radius: 5px;
    background: #808080;
`;
